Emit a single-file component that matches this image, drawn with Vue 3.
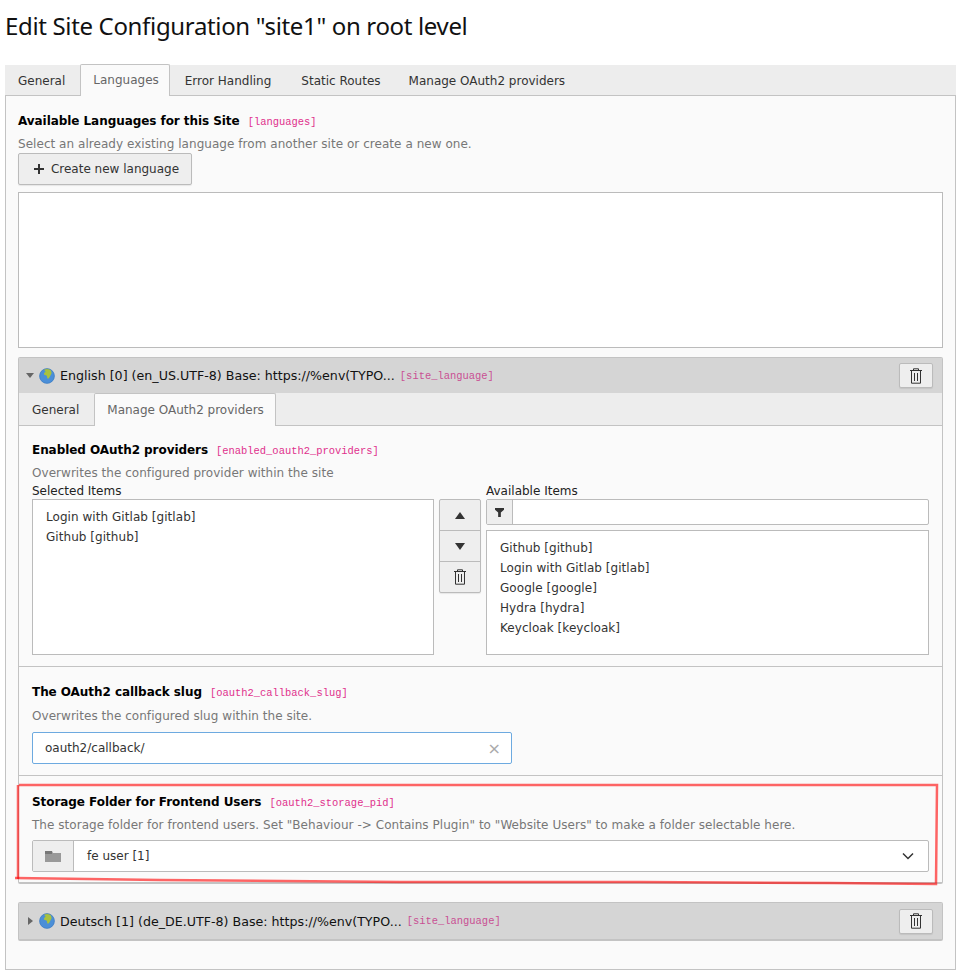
<script setup>
const mainTabs = ['General', 'Languages', 'Error Handling', 'Static Routes', 'Manage OAuth2 providers']
const selectedItems = ['Login with Gitlab [gitlab]', 'Github [github]']
const availableItems = [
  'Github [github]',
  'Login with Gitlab [gitlab]',
  'Google [google]',
  'Hydra [hydra]',
  'Keycloak [keycloak]',
]
</script>

<template>
  <div class="page">
    <h1 class="title">Edit Site Configuration "site1" on root level</h1>

    <ul class="tabs main-tabs">
      <li v-for="t in mainTabs" :key="t" class="tab" :class="{ active: t === 'Languages' }">{{ t }}</li>
    </ul>

    <div class="panel">
      <div class="label-row">
        <span class="label">Available Languages for this Site</span>
        <code class="field">[languages]</code>
      </div>
      <p class="desc">Select an already existing language from another site or create a new one.</p>
      <button class="btn create">
        <svg width="12" height="12" viewBox="0 0 12 12"><path d="M5 1h2v4h4v2H7v4H5V7H1V5h4z" fill="#333" /></svg>
        Create new language
      </button>
      <div class="records"></div>

      <section class="lang open">
        <header class="lang-head">
          <svg class="caret" width="8" height="5" viewBox="0 0 8 5"><path d="M0 0h8L4 5z" fill="#666" /></svg>
          <svg class="globe" width="16" height="16" viewBox="0 0 16 16">
            <circle cx="8" cy="8" r="7.6" fill="#4b8fd8" />
            <path d="M5 1.500c2-1 5-1 6.500.5 1 1.500 1.500 3 .5 4.500-1 1-1 3-2.500 4-1 .5-1.500-.5-1.500-2 0-1.500-2-1-3-2-.5-1.500 1-2 1.500-3 0-1-1.500-1-1.500-2z" fill="#a9c23f" />
            <circle cx="8" cy="8" r="7.400" fill="none" stroke="#3b78bd" stroke-width=".6" />
          </svg>
          <span class="lang-title">English [0] (en_US.UTF-8) Base: https://%env(TYPO...</span>
          <code class="field faded">[site_language]</code>
          <button class="btn trash-btn">
            <svg width="14" height="16" viewBox="0 0 14 16" fill="none" stroke="#333" stroke-width="1"><path d="M1 2.500h12M4.500 2.500V.800h5v1.700M2.500 2.500v12.700h9V2.500M5.500 5v8M8.500 5v8" /></svg>
          </button>
        </header>

        <ul class="tabs inner-tabs">
          <li class="tab">General</li>
          <li class="tab active">Manage OAuth2 providers</li>
        </ul>

        <div class="lang-body">
          <div class="block providers">
            <div class="label-row">
              <span class="label">Enabled OAuth2 providers</span>
              <code class="field">[enabled_oauth2_providers]</code>
            </div>
            <p class="desc">Overwrites the configured provider within the site</p>
            <div class="multi">
              <div class="col-selected">
                <div class="col-label">Selected Items</div>
                <ul class="list tall">
                  <li v-for="i in selectedItems" :key="i">{{ i }}</li>
                </ul>
              </div>
              <div class="moves">
                <button class="move">
                  <svg width="10" height="7" viewBox="0 0 10 7"><path d="M5 0l5 7H0z" fill="#333" /></svg>
                </button>
                <button class="move">
                  <svg width="10" height="7" viewBox="0 0 10 7"><path d="M0 0h10L5 7z" fill="#333" /></svg>
                </button>
                <button class="move">
                  <svg width="14" height="16" viewBox="0 0 14 16" fill="none" stroke="#333" stroke-width="1"><path d="M1 2.500h12M4.500 2.500V.800h5v1.700M2.500 2.500v12.700h9V2.500M5.500 5v8M8.500 5v8" /></svg>
                </button>
              </div>
              <div class="col-available">
                <div class="col-label">Available Items</div>
                <div class="filter">
                  <span class="filter-icon">
                    <svg width="9" height="9" viewBox="0 0 10 10"><path d="M0 0h10v2L6.500 5v5h-3V5L0 2z" fill="#333" /></svg>
                  </span>
                </div>
                <ul class="list short">
                  <li v-for="i in availableItems" :key="i">{{ i }}</li>
                </ul>
              </div>
            </div>
          </div>

          <div class="block slug">
            <div class="label-row">
              <span class="label">The OAuth2 callback slug</span>
              <code class="field">[oauth2_callback_slug]</code>
            </div>
            <p class="desc">Overwrites the configured slug within the site.</p>
            <div class="slug-input">
              <span>oauth2/callback/</span>
              <span class="clear">×</span>
            </div>
          </div>

          <div class="block storage">
            <div class="label-row">
              <span class="label">Storage Folder for Frontend Users</span>
              <code class="field">[oauth2_storage_pid]</code>
            </div>
            <p class="desc">The storage folder for frontend users. Set "Behaviour -&gt; Contains Plugin" to "Website Users" to make a folder selectable here.</p>
            <div class="select">
              <span class="select-icon">
                <svg width="16" height="12" viewBox="0 0 16 12"><path d="M0 1h7l1 2h8v9H0z" fill="#999" /><path d="M0 1h7v3H0z" fill="#777" /></svg>
              </span>
              <span class="select-value">fe user [1]</span>
              <svg class="chevron" width="12" height="8" viewBox="0 0 12 8" fill="none" stroke="#333" stroke-width="1.500"><path d="M1 1.500l5 5 5-5" /></svg>
            </div>
          </div>
        </div>
      </section>

      <section class="lang closed">
        <header class="lang-head">
          <svg class="caret" width="5" height="8" viewBox="0 0 5 8"><path d="M0 0l5 4-5 4z" fill="#666" /></svg>
          <svg class="globe" width="16" height="16" viewBox="0 0 16 16">
            <circle cx="8" cy="8" r="7.6" fill="#4b8fd8" />
            <path d="M5 1.500c2-1 5-1 6.500.5 1 1.500 1.500 3 .5 4.500-1 1-1 3-2.500 4-1 .5-1.500-.5-1.500-2 0-1.500-2-1-3-2-.5-1.500 1-2 1.500-3 0-1-1.500-1-1.500-2z" fill="#a9c23f" />
            <circle cx="8" cy="8" r="7.400" fill="none" stroke="#3b78bd" stroke-width=".6" />
          </svg>
          <span class="lang-title">Deutsch [1] (de_DE.UTF-8) Base: https://%env(TYPO...</span>
          <code class="field faded">[site_language]</code>
          <button class="btn trash-btn">
            <svg width="14" height="16" viewBox="0 0 14 16" fill="none" stroke="#333" stroke-width="1"><path d="M1 2.500h12M4.500 2.500V.800h5v1.700M2.500 2.500v12.700h9V2.500M5.500 5v8M8.500 5v8" /></svg>
          </button>
        </header>
      </section>
    </div>

    <!-- hand drawn marker from the screenshot -->
    <svg class="marker" width="958" height="980" viewBox="0 0 958 980" fill="none" stroke="#ff0000" stroke-opacity=".6" stroke-width="2.500">
      <path d="M19 785 L937 785 L936 884 L830 883 L640 882 L400 882 L160 880 L15 878" />
      <path d="M18 785 V879" />
    </svg>
  </div>
</template>

<style scoped>
.page {
  position: relative;
  width: 958px;
  height: 980px;
  overflow: hidden;
  background: #fff;
  font-family: "DejaVu Sans", Verdana, sans-serif;
  font-size: 12px;
  color: #333;
  box-sizing: border-box;
  padding: 0 2px 0 5px;
}
.title {
  margin: 0;
  height: 65px;
  padding-top: 11px;
  box-sizing: border-box;
  font-family: "Noto Sans", sans-serif;
  font-size: 24px;
  letter-spacing: -0.34px;
  line-height: 30px;
  font-weight: 400;
  color: #111;
}
.tabs {
  display: flex;
  list-style: none;
  margin: 0;
  padding: 0;
  background: #ededed;
  border-bottom: 1px solid #c3c3c3;
}
.main-tabs {
  height: 30px;
}
.tab {
  padding: 0 14px 0 12px;
  line-height: 31px;
  height: 31px;
  box-sizing: border-box;
  border: 1px solid transparent;
  border-bottom: 0;
  color: #333;
  white-space: nowrap;
}
.tab.active {
  background: #fafafa;
  border-color: #c3c3c3;
  color: #666;
  margin-top: -1px;
  height: 32px;
  padding-right: 10px;
  border-radius: 2px 2px 0 0;
}
.main-tabs .active + .tab {
  margin-left: 2px;
  padding-right: 16px;
}
.panel {
  height: 874px;
  box-sizing: border-box;
  background: #fafafa;
  border: 1px solid #c3c3c3;
  border-top: 0;
  padding: 18px 12px 0;
}
.label-row {
  display: flex;
  align-items: baseline;
  gap: 8px;
  height: 15px;
  line-height: 15px;
}
.label {
  font-weight: 700;
  letter-spacing: -0.06px;
  color: #000;
}
.field {
  font-family: "Liberation Mono", monospace;
  font-size: 10.44px;
  color: #e0308c;
  font-weight: 400;
}
.field.faded {
  color: #c94f93;
}
.desc {
  margin: 8px 0 0;
  line-height: 15px;
  letter-spacing: 0.04px;
  color: #777;
  white-space: nowrap;
}
.btn {
  display: inline-flex;
  align-items: center;
  justify-content: center;
  font: inherit;
  color: #333;
  background: #eee;
  border: 1px solid #bbb;
  border-radius: 2px;
  padding: 0;
  box-shadow: 0 1px 1px rgba(0, 0, 0, 0.08);
}
.create {
  width: 174px;
  height: 32px;
  gap: 6px;
  margin-top: 1px;
  display: flex;
  padding-left: 2px;
}
.records {
  margin-top: 7px;
  height: 156px;
  box-sizing: border-box;
  background: #fff;
  border: 1px solid #bbb;
}
.lang {
  border: 1px solid #c3c3c3;
  border-radius: 2px;
}
.lang.open {
  margin-top: 9px;
  height: 527px;
  box-sizing: border-box;
  border-bottom-width: 2px;
}
.lang.closed {
  margin-top: 18px;
  border-bottom-width: 2px;
}
.lang-head {
  display: flex;
  align-items: center;
  height: 35px;
  padding: 0 9px 0 7px;
  background: #d5d5d5;
  color: #111;
}
.closed .lang-head {
  height: 36px;
  padding-left: 8px;
}
.caret {
  flex: none;
  margin-right: 5px;
}
.closed .caret {
  margin-left: 1px;
  margin-right: 6px;
}
.globe {
  flex: none;
  margin-right: 5px;
}
.lang-title {
  margin-right: 5px;
  font-size: 12.65px;
  white-space: nowrap;
}
.trash-btn {
  margin-left: auto;
  width: 34px;
  height: 25px;
}
.inner-tabs {
  height: 32px;
}
.inner-tabs .tab {
  height: 33px;
  line-height: 32px;
}
.inner-tabs .tab.active {
  margin-top: 0;
  height: 33px;
  padding-right: 11px;
}
.lang-body {
  background: #fafafa;
}
.block {
  padding: 0 13px;
  box-sizing: border-box;
  border-bottom: 1px solid #c3c3c3;
}
.block.storage {
  border-bottom: 0;
}
.providers {
  height: 241px;
  padding-top: 17px;
}
.slug {
  height: 109px;
  padding-top: 18px;
}
.slug .desc {
  margin-top: 9px;
}
.storage {
  padding-top: 19px;
}
.multi {
  display: flex;
  margin-top: 3px;
}
.col-selected {
  width: 402px;
  flex: none;
}
.col-label {
  height: 15px;
  line-height: 15px;
  color: #222;
}
.list {
  list-style: none;
  margin: 0;
  padding: 7px 13px;
  box-sizing: border-box;
  background: #fff;
  border: 1px solid #bbb;
  line-height: 20px;
  letter-spacing: 0.05px;
  color: #333;
}
.tall {
  height: 156px;
}
.short {
  height: 125px;
  margin-top: 5px;
}
.moves {
  flex: none;
  width: 42px;
  margin: 15px 5px 0;
  height: 94px;
  display: flex;
  flex-direction: column;
  border: 1px solid #bbb;
  border-radius: 2px;
  box-sizing: border-box;
  background: #eee;
  box-shadow: 0 1px 1px rgba(0, 0, 0, 0.08);
}
.move {
  flex: 1;
  display: flex;
  align-items: center;
  justify-content: center;
  padding: 0;
  border: 0;
  background: transparent;
  border-bottom: 1px solid #bbb;
}
.move:last-child {
  border-bottom: 0;
}
.col-available {
  flex: 1;
}
.filter {
  height: 26px;
  box-sizing: border-box;
  background: #fff;
  border: 1px solid #bbb;
  border-radius: 2px;
}
.filter-icon {
  display: flex;
  align-items: center;
  justify-content: center;
  width: 25px;
  height: 24px;
  background: #eee;
  border-right: 1px solid #bbb;
}
.slug-input {
  display: flex;
  align-items: center;
  justify-content: space-between;
  margin-top: 8px;
  width: 480px;
  height: 32px;
  box-sizing: border-box;
  padding: 0 10px 0 12px;
  background: #fff;
  border: 1px solid #6daae0;
  border-radius: 2px;
  color: #333;
}
.clear {
  font-size: 16px;
  color: #aaa;
}
.select {
  display: flex;
  align-items: center;
  margin-top: 7px;
  height: 32px;
  box-sizing: border-box;
  background: #fff;
  border: 1px solid #bbb;
  border-radius: 2px;
}
.select-icon {
  display: flex;
  align-items: center;
  justify-content: center;
  width: 40px;
  height: 30px;
  background: #eee;
  border-right: 1px solid #bbb;
}
.select-value {
  margin-left: 13px;
  flex: 1;
}
.chevron {
  margin-right: 14px;
}
.marker {
  position: absolute;
  left: 0;
  top: 0;
  pointer-events: none;
}
</style>
